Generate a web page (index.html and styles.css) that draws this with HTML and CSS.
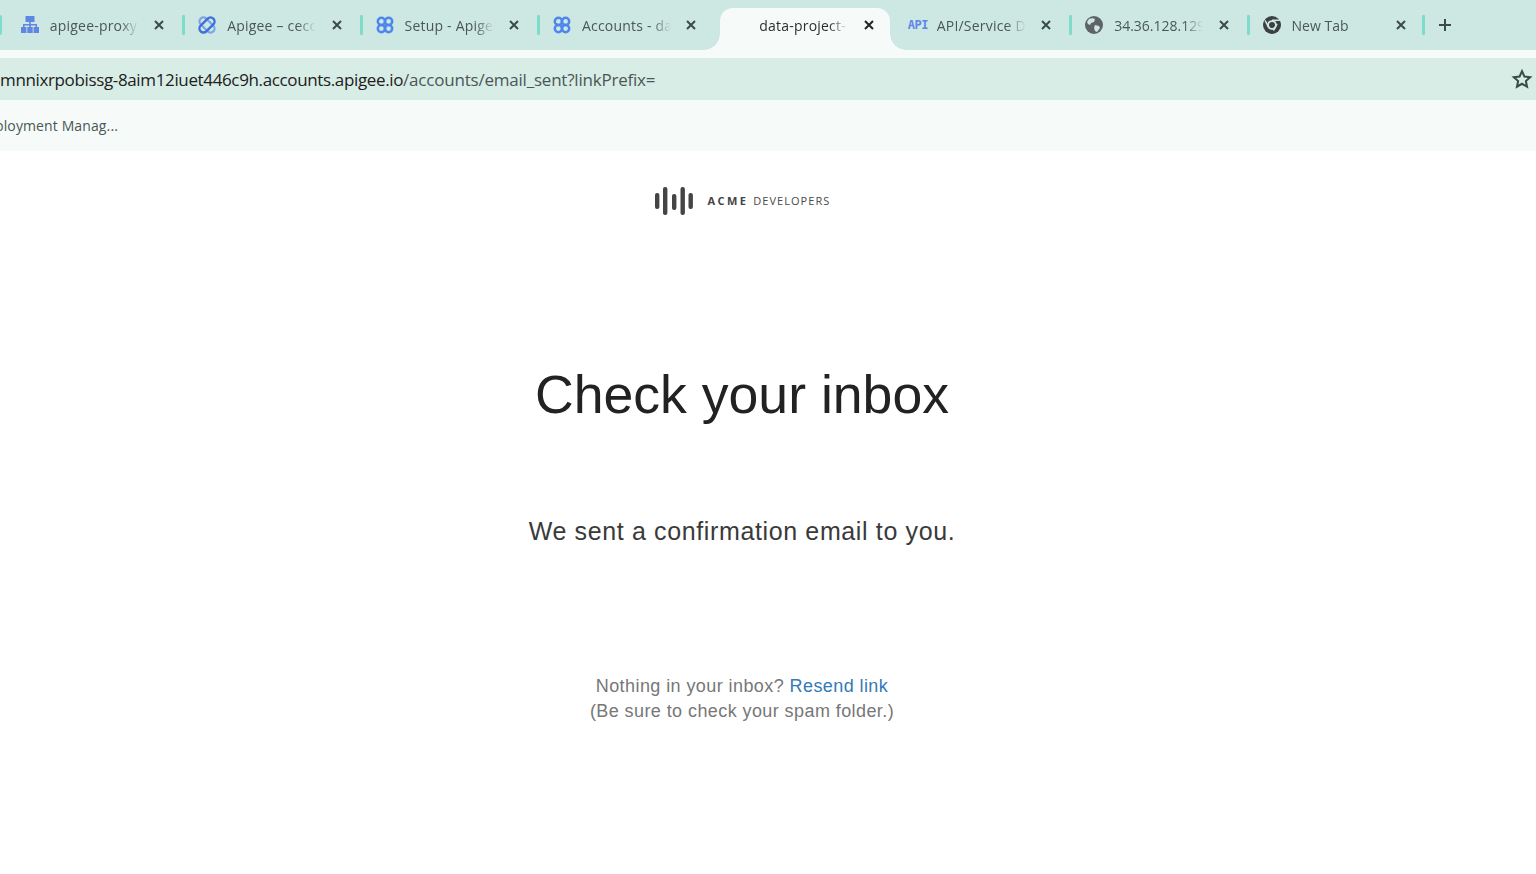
FILE: index.html
```html
<!doctype html>
<html>
<head>
	<title>Check your inbox</title>
	<link rel="stylesheet" href="styles.css">
</head>
<body>
	<div class="tabstrip">
		<span class="edge"></span>
		<div class="tab">
			<svg class="fav" viewBox="0 0 18 18"><g fill="#5f86e0"><rect x="4.500" y="0" width="9" height="6"/><rect x="8.200" y="6" width="1.600" height="5"/><rect x="2" y="8" width="14" height="1.500"/><rect x="2" y="8" width="1.500" height="3"/><rect x="14.500" y="8" width="1.500" height="3"/><rect x="0" y="11" width="5.400" height="6"/><rect x="6.300" y="11" width="5.400" height="6"/><rect x="12.600" y="11" width="5.400" height="6"/></g></svg>
			<span class="title">apigee-proxy</span>
			<svg class="close" viewBox="0 0 10 10"><path d="M1 1l8 8M9 1l-8 8"/></svg>
		</div>
		<div class="tab sep">
			<svg class="fav fav-big" viewBox="0 0 20 20"><rect x="1" y="6" width="18" height="8" rx="4" transform="rotate(45 10 10)" fill="none" stroke="#7fa5e8" stroke-width="2.200"/><rect x="1" y="6" width="18" height="8" rx="4" transform="rotate(-45 10 10)" fill="none" stroke="#3f6fdc" stroke-width="2.400"/></svg>
			<span class="title">Apigee – cecc</span>
			<svg class="close" viewBox="0 0 10 10"><path d="M1 1l8 8M9 1l-8 8"/></svg>
		</div>
		<div class="tab sep">
			<svg class="fav" viewBox="0 0 20 20"><g fill="none" stroke="#4f86ec" stroke-width="2.800"><circle cx="6" cy="6" r="4"/><circle cx="14" cy="6" r="4"/><circle cx="6" cy="14" r="4"/><circle cx="14" cy="14" r="4"/></g></svg>
			<span class="title">Setup - Apige</span>
			<svg class="close" viewBox="0 0 10 10"><path d="M1 1l8 8M9 1l-8 8"/></svg>
		</div>
		<div class="tab sep">
			<svg class="fav" viewBox="0 0 20 20"><g fill="none" stroke="#4f86ec" stroke-width="2.800"><circle cx="6" cy="6" r="4"/><circle cx="14" cy="6" r="4"/><circle cx="6" cy="14" r="4"/><circle cx="14" cy="14" r="4"/></g></svg>
			<span class="title">Accounts - da</span>
			<svg class="close" viewBox="0 0 10 10"><path d="M1 1l8 8M9 1l-8 8"/></svg>
		</div>
		<div class="tab active">
			<span class="title">data-project-</span>
			<svg class="close" viewBox="0 0 10 10"><path d="M1 1l8 8M9 1l-8 8"/></svg>
		</div>
		<div class="tab">
			<span class="api">API</span>
			<span class="title">API/Service D</span>
			<svg class="close" viewBox="0 0 10 10"><path d="M1 1l8 8M9 1l-8 8"/></svg>
		</div>
		<div class="tab sep">
			<svg class="fav" viewBox="0 0 18 18"><circle cx="9" cy="9" r="9" fill="#5f6368"/><path fill="#cde8e2" d="M4 3c2-1 4-1 6 0l-1 3-3 1-1 2-2-1-1-2zM10 9l4 1 1 2-3 4-2-1-1-3z"/></svg>
			<span class="title plain">34.36.128.129</span>
			<svg class="close" viewBox="0 0 10 10"><path d="M1 1l8 8M9 1l-8 8"/></svg>
		</div>
		<div class="tab sep">
			<svg class="fav" viewBox="0 0 18 18"><circle cx="9" cy="9" r="9" fill="#3c4043"/><circle cx="9" cy="9" r="4.800" fill="#cde8e2"/><circle cx="9" cy="9" r="3" fill="#3c4043"/><path fill="#cde8e2" d="M9 3.600h7.500l.6 1.400H9zM4.800 11.500 1.600 5l1-1 4 7zM9.500 13.800l4-6 1.300.3-3.800 7z"/></svg>
			<span class="title plain">New Tab</span>
			<svg class="close" viewBox="0 0 10 10"><path d="M1 1l8 8M9 1l-8 8"/></svg>
		</div>
		<div class="newtab sep">
			<svg width="14" height="14" viewBox="0 0 14 14"><path d="M7 1v12M1 7h12" stroke="#3c4a4a" stroke-width="2"/></svg>
		</div>
	</div>

	<div class="toolbar">
		<div class="omnibox">
			<div class="url"><b>mnnixrpobissg-8aim12iuet446c9h.accounts.apigee.io</b>/accounts/email_sent?linkPrefix=</div>
			<svg class="star" width="22" height="22" viewBox="0 0 24 24"><path d="M12 3.500l2.600 5.800 6.300.7-4.700 4.200 1.300 6.200L12 17.200l-5.500 3.200 1.300-6.200L3.100 10l6.300-.7z" fill="none" stroke="#3c4a4a" stroke-width="2.200"/></svg>
		</div>
	</div>

	<div class="bookmarks">
		<span class="bookmark">ployment Manag...</span>
	</div>

	<main class="page">
		<div class="logo">
			<svg width="40" height="30" viewBox="0 0 40 30"><g fill="#444"><rect x="1" y="7" width="4.400" height="16" rx="2"/><rect x="9" y="1" width="4.400" height="28" rx="2"/><rect x="18" y="8" width="4.400" height="16" rx="2"/><rect x="26.500" y="1" width="4.400" height="28" rx="2"/><rect x="34.500" y="7" width="4.400" height="16" rx="2"/></g></svg>
			<span class="logo-text"><b>ACME</b> DEVELOPERS</span>
		</div>
		<h1>Check your inbox</h1>
		<p class="lead">We sent a confirmation email to you.</p>
		<p class="note">Nothing in your inbox? <a href="#">Resend link</a><br>(Be sure to check your spam folder.)</p>
	</main>
</body>
</html>
```

FILE: styles.css
```css
html, body {
	margin: 0;
	background-color: white;
}

body {
	font-family: "Open Sans", sans-serif;
	overflow: hidden;
}

.tabstrip {
	display: flex;
	height: 50px;
	padding-left: 5.3px;
	background-color: #cde8e2;
	box-sizing: border-box;
	position: relative;
}

.edge {
	position: absolute;
	left: 0;
	top: 15px;
	width: 2px;
	height: 20px;
	background-color: #7edccb;
	border-radius: 0 2px 2px 0;
}

.tab {
	position: relative;
	display: flex;
	align-items: center;
	flex: 0 0 177.4px;
	box-sizing: border-box;
	padding: 0 18.5px 0 15.5px;
	color: #4a5756;
	font-size: 14px;
}

.sep::before {
	content: "";
	position: absolute;
	left: -0.5px;
	top: 15px;
	width: 3px;
	height: 20px;
	background-color: #7edccb;
	border-radius: 1px;
}

.fav {
	flex: none;
	width: 18px;
	height: 18px;
}

.fav-big {
	width: 20px;
	height: 20px;
	margin: 0 -1px;
}

.api {
	flex: none;
	width: 18px;
	color: #5f86e8;
	font-family: "DejaVu Sans Mono", monospace;
	font-size: 12px;
	font-weight: bold;
	letter-spacing: -0.5px;
	white-space: nowrap;
}

.title {
	width: 90px;
	margin-left: 11px;
	overflow: hidden;
	white-space: nowrap;
	letter-spacing: 0.2px;
	-webkit-mask-image: linear-gradient(to right, black 70px, transparent 89px);
	mask-image: linear-gradient(to right, black 70px, transparent 89px);
}

.title.plain {
	letter-spacing: 0;
}

.close {
	flex: none;
	width: 10px;
	height: 10px;
	margin-left: auto;
	fill: none;
	stroke: #3c4a4a;
	stroke-width: 2;
}

.tab.active {
	align-self: flex-end;
	height: 42px;
	margin: 0 2.400px 0 5px;
	flex: 0 0 170px;
	padding: 0 15.5px 8px 39.5px;
	background-color: #f6fbf9;
	border-radius: 13px 13px 0 0;
	color: #2a2f2f;
}

.tab.active .title {
	margin-left: 0;
}

.tab.active .close {
	stroke: #202424;
}

.tab.active::before,
.tab.active::after {
	content: "";
	position: absolute;
	bottom: 0;
	width: 16px;
	height: 16px;
}

.tab.active::before {
	left: -16px;
	background: radial-gradient(circle at 0 0, #cde8e2 15.500px, #f6fbf9 16px);
}

.tab.active::after {
	right: -16px;
	background: radial-gradient(circle at 100% 0, #cde8e2 15.500px, #f6fbf9 16px);
}

.newtab {
	position: relative;
	display: flex;
	align-items: center;
	padding-left: 15.5px;
	margin-left: -2px;
}

.toolbar {
	height: 50px;
	padding-top: 8px;
	box-sizing: border-box;
	background-color: #f6fbf9;
}

.omnibox {
	display: flex;
	align-items: center;
	justify-content: space-between;
	height: 42px;
	padding-right: 3px;
	background-color: #d9ede7;
}

.url {
	color: #4a5756;
	font-size: 17px;
	letter-spacing: -0.21px;
	white-space: nowrap;
}

.url b {
	color: #1c2120;
	font-weight: normal;
	letter-spacing: -0.36px;
}

.bookmarks {
	display: flex;
	align-items: center;
	height: 51px;
	background-color: #f6fbf9;
}

.bookmark {
	margin-left: -5px;
	color: #4a5756;
	font-size: 14px;
	letter-spacing: 0.12px;
}

.page {
	display: flex;
	flex-direction: column;
	align-items: center;
	padding-right: 52px;
	font-family: "Liberation Sans", Arial, sans-serif;
}

.logo {
	display: flex;
	align-items: center;
	gap: 14px;
	margin-top: 35px;
	height: 30px;
}

.logo-text {
	margin-top: -1px;
	color: #4a4a4a;
	font-family: "Open Sans", sans-serif;
	font-size: 11px;
	letter-spacing: 1.050px;
}

.logo-text b {
	margin-right: 1px;
	color: #444;
	letter-spacing: 2.400px;
}

h1 {
	margin: 146px 0 0;
	color: #222;
	font-size: 53.6px;
	font-weight: normal;
	line-height: 64px;
}

.lead {
	margin: 89px 0 0;
	color: #3a3a3a;
	font-size: 25px;
	letter-spacing: 0.63px;
	line-height: 32px;
}

.note {
	margin: 127px 0 0;
	color: #777;
	font-size: 18px;
	letter-spacing: 0.42px;
	line-height: 25px;
	text-align: center;
}

.note a {
	color: #337ab7;
	text-decoration: none;
}
```
